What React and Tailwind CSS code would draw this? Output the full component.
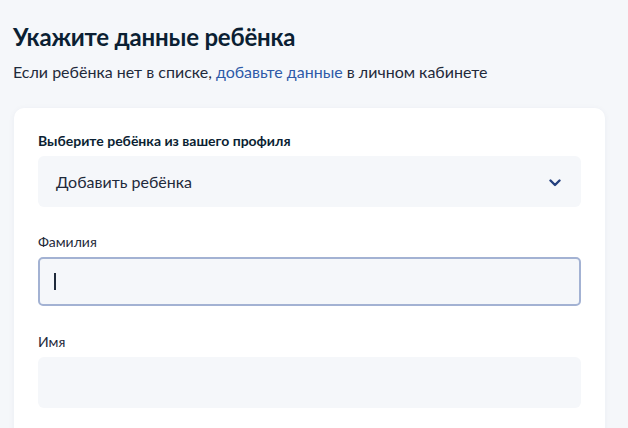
function Field({ label, children }) {
  return (
    <div className="flex flex-col">
      <p className="text-[14px] leading-[18px] text-[#1f2a3b] mb-[6px]">{label}</p>
      {children}
    </div>
  )
}

export default function App() {
  return (
    <div className="w-[628px] h-[428px] overflow-hidden bg-[#f5f7fa] font-['Lato','Noto_Sans',sans-serif] text-[#0b1f33]">
      <div className="pl-[13px] pr-[23px] pt-[21px]">
        <h1 className="text-[24px] leading-[32px] font-bold tracking-[-0.2px]">Укажите данные ребёнка</h1>
        <p className="mt-[9px] text-[16px] leading-[20px] text-[#1f2a3b]">
          Если ребёнка нет в списке, <span className="text-[#2e5aa8]">добавьте данные</span> в личном кабинете
        </p>

        <div className="mt-[26px] ml-[1px] bg-white rounded-[10px] shadow-[0_1px_6px_rgba(40,60,100,0.05)] px-[24px] pt-[24px] pb-[60px] flex flex-col gap-[26px]">
          <div className="flex flex-col">
            <p className="text-[14px] leading-[18px] font-bold text-[#0b1f33] mb-[6px]">Выберите ребёнка из вашего профиля</p>
            <div className="h-[51px] rounded-[6px] bg-[#f5f7fa] flex items-center justify-between pl-[18px] pr-[20px]">
              <span className="text-[16px] text-[#1f2a3b]">Добавить ребёнка</span>
              <svg width="12" height="8" viewBox="0 0 12 8" className="mt-[2px]">
                <path d="M1.5 1.5 L6 6 L10.5 1.5" fill="none" stroke="#24407e" strokeWidth="2.4" strokeLinecap="round" strokeLinejoin="round" />
              </svg>
            </div>
          </div>

          <Field label="Фамилия">
            <div className="h-[49px] rounded-[5px] bg-[#f5f7fa] border-[2px] border-[#a3b2d3] flex items-center pl-[14px]">
              <span className="w-[1.5px] h-[17px] bg-[#1f2a3b]" />
            </div>
          </Field>

          <div className="mt-[1px]">
            <Field label="Имя">
              <div className="h-[51px] rounded-[6px] bg-[#f5f7fa]" />
            </Field>
          </div>
        </div>
      </div>
    </div>
  )
}
